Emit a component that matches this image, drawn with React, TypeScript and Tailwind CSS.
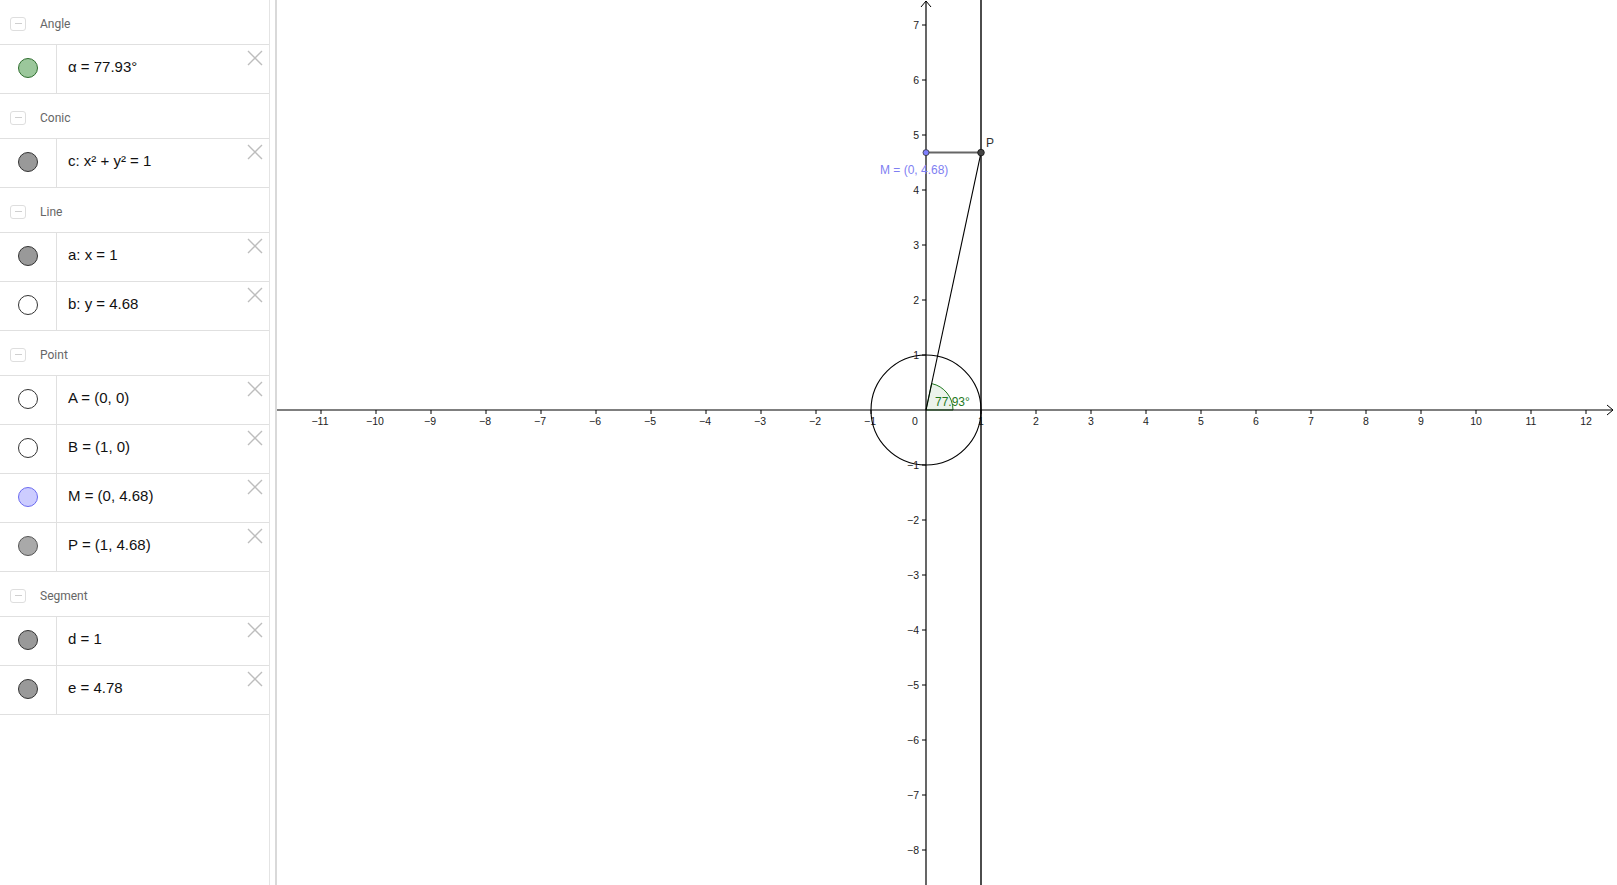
import React from "react";

type Item = {
  label: React.ReactNode;
  dot: string;
};

type Group = {
  title: string;
  items: Item[];
};

const groups: Group[] = [
  {
    title: "Angle",
    items: [{ label: "α = 77.93°", dot: "bg-[#9bc79b] border-[#2f6e2f]" }],
  },
  {
    title: "Conic",
    items: [{ label: "c: x² + y² = 1", dot: "bg-[#999999] border-[#333333]" }],
  },
  {
    title: "Line",
    items: [
      { label: "a: x = 1", dot: "bg-[#999999] border-[#333333]" },
      { label: "b: y = 4.68", dot: "bg-white border-[#333333]" },
    ],
  },
  {
    title: "Point",
    items: [
      { label: "A = (0, 0)", dot: "bg-white border-[#333333]" },
      { label: "B = (1, 0)", dot: "bg-white border-[#333333]" },
      { label: "M = (0, 4.68)", dot: "bg-[#ccccff] border-[#6b6bf0]" },
      { label: "P = (1, 4.68)", dot: "bg-[#a9a9a9] border-[#555555]" },
    ],
  },
  {
    title: "Segment",
    items: [
      { label: "d = 1", dot: "bg-[#999999] border-[#333333]" },
      { label: "e = 4.78", dot: "bg-[#999999] border-[#333333]" },
    ],
  },
];

function CloseIcon() {
  return (
    <svg width="16" height="16" viewBox="0 0 16 16" className="shrink-0">
      <path d="M1 1 L15 15 M15 1 L1 15" stroke="#bdbdbd" strokeWidth="1.4" fill="none" />
    </svg>
  );
}

function GroupHeader({ title }: { title: string }) {
  return (
    <div className="flex h-[44px] items-center pt-[3px] pl-[10px]">
      <div className="flex h-[14px] w-[16px] items-center justify-center rounded-[3px] border border-[#dedede]">
        <div className="h-[1.5px] w-[7px] bg-[#cfcfcf]" />
      </div>
      <span className="ml-[14px] font-['Roboto',sans-serif] text-[12px] text-[#666666]">{title}</span>
    </div>
  );
}

function AlgebraRow({ item }: { item: Item }) {
  return (
    <div className="flex h-[49px] border-t border-[#e0e0e0]">
      <div className="flex w-[57px] shrink-0 items-center justify-center border-r border-[#e0e0e0] pb-[3px]">
        <div className={`h-[20px] w-[20px] rounded-full border ${item.dot}`} />
      </div>
      <div className="flex flex-1 items-center pl-[11px] pb-[3px] font-['Liberation_Sans',sans-serif] text-[15px] text-[#111111]">
        {item.label}
      </div>
      <div className="mt-[5px] mr-[6px]">
        <CloseIcon />
      </div>
    </div>
  );
}

function Graphics() {
  const W = 1340;
  const H = 885;
  const ox = 649;
  const oy = 410;
  const u = 55;
  const yP = oy - 4.68 * u;
  const xs = Array.from({ length: 24 }, (_, i) => i - 11).filter((n) => n !== 0);
  const ys = Array.from({ length: 16 }, (_, i) => i - 8).filter((n) => n !== 0);
  const fmt = (n: number) => (n < 0 ? `−${-n}` : `${n}`);
  const r = 27;
  const a = (77.93 * Math.PI) / 180;
  const ax = ox + r * Math.cos(a);
  const ay = oy - r * Math.sin(a);
  const axisFont = "10.5";

  return (
    <svg width={W} height={H} viewBox={`0 0 ${W} ${H}`} className="block">
      {/* angle sector */}
      <path
        d={`M${ox} ${oy} L${ox + r} ${oy} A${r} ${r} 0 0 0 ${ax} ${ay} Z`}
        fill="#006400"
        fillOpacity="0.08"
        stroke="#1f7a1f"
        strokeWidth="1"
      />

      {/* axes */}
      <line x1={0} y1={oy} x2={W - 4} y2={oy} stroke="#000" strokeWidth="1.2" />
      <path d={`M${W - 10} ${oy - 5} L${W - 4} ${oy} L${W - 10} ${oy + 5}`} stroke="#000" fill="none" strokeWidth="1" />
      <line x1={ox} y1={1} x2={ox} y2={H} stroke="#000" strokeWidth="1.2" />
      <path d={`M${ox - 5} ${7} L${ox} ${1} L${ox + 5} ${7}`} stroke="#000" fill="none" strokeWidth="1" />

      {xs.map((n) => (
        <g key={`x${n}`}>
          <line x1={ox + n * u} y1={oy} x2={ox + n * u} y2={oy + 4} stroke="#000" strokeWidth="1" />
          <text
            x={ox + n * u + (n < 0 ? -1 : 0)}
            y={oy + 14.5}
            textAnchor="middle"
            fontFamily="Liberation Sans, sans-serif"
            fontSize={axisFont}
            fill="#222"
          >
            {fmt(n)}
          </text>
        </g>
      ))}
      {ys.map((n) => (
        <g key={`y${n}`}>
          <line x1={ox - 4} y1={oy - n * u} x2={ox} y2={oy - n * u} stroke="#000" strokeWidth="1" />
          <text
            x={ox - 7}
            y={oy - n * u + 4}
            textAnchor="end"
            fontFamily="Liberation Sans, sans-serif"
            fontSize={axisFont}
            fill="#222"
          >
            {fmt(n)}
          </text>
        </g>
      ))}
      <text x={ox - 11} y={oy + 14.5} textAnchor="middle" fontFamily="Liberation Sans, sans-serif" fontSize={axisFont} fill="#222">
        0
      </text>

      {/* conic c */}
      <circle cx={ox} cy={oy} r={u} fill="none" stroke="#000" strokeWidth="1.1" />
      {/* line a */}
      <line x1={ox + u} y1={0} x2={ox + u} y2={H} stroke="#000" strokeWidth="1.4" />
      {/* segment d */}
      <line x1={ox} y1={yP} x2={ox + u} y2={yP} stroke="#666" strokeWidth="2" />
      {/* segment e */}
      <line x1={ox} y1={oy} x2={ox + u} y2={yP} stroke="#000" strokeWidth="1.1" />

      <text x={ox + 9} y={oy - 4.5} fontFamily="Liberation Sans, sans-serif" fontSize="12" fill="#1f7a1f">
        77.93°
      </text>

      {/* points */}
      <circle cx={ox} cy={yP} r="3" fill="#8080ff" stroke="#333" strokeWidth="0.8" />
      <circle cx={ox + u} cy={yP} r="3.3" fill="#444" stroke="#111" strokeWidth="0.8" />
      <text x={ox - 46} y={yP + 21} fontFamily="Liberation Sans, sans-serif" fontSize="12" fill="#7f7ff2">
        M = (0, 4.68)
      </text>
      <text x={ox + u + 5} y={yP - 6} fontFamily="Liberation Sans, sans-serif" fontSize="12" fill="#333">
        P
      </text>
    </svg>
  );
}

export default function App() {
  return (
    <div className="flex h-[885px] w-[1617px] overflow-hidden bg-white">
      <aside className="w-[270px] shrink-0 border-r border-[#e4e4e4]">
        {groups.map((g) => (
          <div key={g.title} className="border-b border-[#e0e0e0]">
            <GroupHeader title={g.title} />
            {g.items.map((it, i) => (
              <AlgebraRow key={i} item={it} />
            ))}
          </div>
        ))}
      </aside>
      <div className="w-[7px] shrink-0 border-r-2 border-[#d9d9d9]" />
      <div className="flex-1">
        <Graphics />
      </div>
    </div>
  );
}
